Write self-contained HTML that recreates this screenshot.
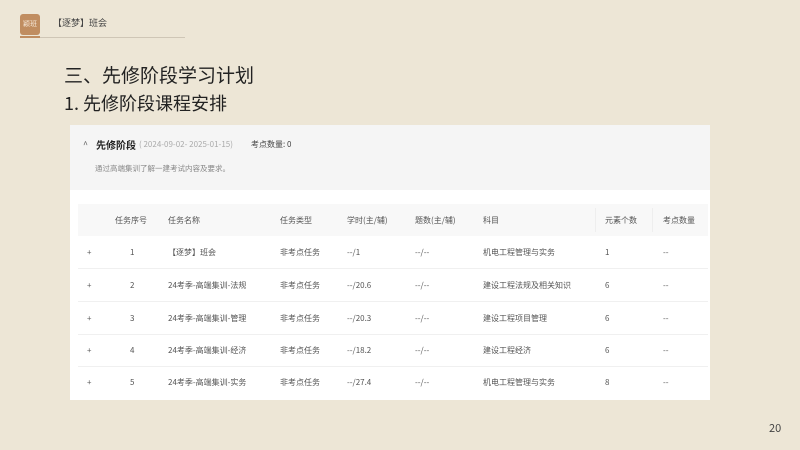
<!DOCTYPE html>
<html><head><meta charset="utf-8"><style>
*{margin:0;padding:0;box-sizing:border-box}
body{width:800px;height:450px;background:#ede6d6;font-family:"Noto Sans CJK SC",sans-serif;position:relative;overflow:hidden;color:#333}
.abs{position:absolute;white-space:nowrap;line-height:1.2}
.logo{left:20px;top:14px;width:20px;height:21px;background:#c08d60;border-radius:3px;color:#f4e6d6;font-size:7px;text-align:center;line-height:21px}
.line{left:20px;top:37px;width:165px;height:1px;background:#cfc6b6}
.line2{left:20px;top:36px;width:20px;height:2px;background:#c08d60}
.panel{left:70px;top:125px;width:640px;height:275px;background:#fff}
.top{left:70px;top:125px;width:640px;height:65px;background:#f5f5f5}
.hdr{left:78px;top:204px;width:630px;height:32px;background:#f8f8f8}
.t{font-size:8px;color:#555}
</style></head><body>
<div class="abs logo">颖班</div>
<div class="abs line"></div><div class="abs line2"></div>
<div class="abs" style="left:53px;top:18px;font-size:9px;color:#444">【逐梦】班会</div>
<div class="abs" style="left:64px;top:64px;font-size:19px;color:#222">三、先修阶段学习计划</div>
<div class="abs" style="left:64px;top:93px;font-size:18px;color:#222">1. 先修阶段课程安排</div>
<div class="abs panel"></div>
<div class="abs top"></div>
<div class="abs" style="left:83px;top:140px;font-size:9px;color:#666">^</div>
<div class="abs" style="left:96px;top:139px;font-size:10px;font-weight:bold;color:#222">先修阶段</div>
<div class="abs" style="left:139px;top:140px;font-size:8px;color:#aaa">( 2024-09-02- 2025-01-15)</div>
<div class="abs" style="left:251px;top:140px;font-size:8px;color:#444">考点数量: 0</div>
<div class="abs" style="left:95px;top:164px;font-size:7.5px;color:#888">通过高端集训了解一建考试内容及要求。</div>
<div class="abs hdr"></div>
<div class="abs t" style="left:115px;top:216px">任务序号</div>
<div class="abs t" style="left:168px;top:216px">任务名称</div>
<div class="abs t" style="left:280px;top:216px">任务类型</div>
<div class="abs t" style="left:347px;top:216px">学时(主/辅)</div>
<div class="abs t" style="left:415px;top:216px">题数(主/辅)</div>
<div class="abs t" style="left:483px;top:216px">科目</div>
<div class="abs t" style="left:605px;top:216px">元素个数</div>
<div class="abs t" style="left:663px;top:216px">考点数量</div>
<div class="abs" style="left:595px;top:208px;width:1px;height:24px;background:#eee"></div>
<div class="abs" style="left:652px;top:208px;width:1px;height:24px;background:#eee"></div>

<div class="abs" style="left:78px;top:268px;width:630px;height:1px;background:#f0f0f0"></div>
<div class="abs" style="left:78px;top:301px;width:630px;height:1px;background:#f0f0f0"></div>
<div class="abs" style="left:78px;top:334px;width:630px;height:1px;background:#f0f0f0"></div>
<div class="abs" style="left:78px;top:366px;width:630px;height:1px;background:#f0f0f0"></div>

<div class="abs t" style="left:87px;top:248px">+</div><div class="abs t" style="left:130px;top:248px">1</div><div class="abs t" style="left:168px;top:248px">【逐梦】班会</div><div class="abs t" style="left:280px;top:248px">非考点任务</div><div class="abs t" style="left:347px;top:248px">--/1</div><div class="abs t" style="left:415px;top:248px">--/--</div><div class="abs t" style="left:483px;top:248px">机电工程管理与实务</div><div class="abs t" style="left:605px;top:248px">1</div><div class="abs t" style="left:663px;top:248px">--</div>

<div class="abs t" style="left:87px;top:281px">+</div><div class="abs t" style="left:130px;top:281px">2</div><div class="abs t" style="left:168px;top:281px">24考季-高端集训-法规</div><div class="abs t" style="left:280px;top:281px">非考点任务</div><div class="abs t" style="left:347px;top:281px">--/20.6</div><div class="abs t" style="left:415px;top:281px">--/--</div><div class="abs t" style="left:483px;top:281px">建设工程法规及相关知识</div><div class="abs t" style="left:605px;top:281px">6</div><div class="abs t" style="left:663px;top:281px">--</div>

<div class="abs t" style="left:87px;top:314px">+</div><div class="abs t" style="left:130px;top:314px">3</div><div class="abs t" style="left:168px;top:314px">24考季-高端集训-管理</div><div class="abs t" style="left:280px;top:314px">非考点任务</div><div class="abs t" style="left:347px;top:314px">--/20.3</div><div class="abs t" style="left:415px;top:314px">--/--</div><div class="abs t" style="left:483px;top:314px">建设工程项目管理</div><div class="abs t" style="left:605px;top:314px">6</div><div class="abs t" style="left:663px;top:314px">--</div>

<div class="abs t" style="left:87px;top:346px">+</div><div class="abs t" style="left:130px;top:346px">4</div><div class="abs t" style="left:168px;top:346px">24考季-高端集训-经济</div><div class="abs t" style="left:280px;top:346px">非考点任务</div><div class="abs t" style="left:347px;top:346px">--/18.2</div><div class="abs t" style="left:415px;top:346px">--/--</div><div class="abs t" style="left:483px;top:346px">建设工程经济</div><div class="abs t" style="left:605px;top:346px">6</div><div class="abs t" style="left:663px;top:346px">--</div>

<div class="abs t" style="left:87px;top:378px">+</div><div class="abs t" style="left:130px;top:378px">5</div><div class="abs t" style="left:168px;top:378px">24考季-高端集训-实务</div><div class="abs t" style="left:280px;top:378px">非考点任务</div><div class="abs t" style="left:347px;top:378px">--/27.4</div><div class="abs t" style="left:415px;top:378px">--/--</div><div class="abs t" style="left:483px;top:378px">机电工程管理与实务</div><div class="abs t" style="left:605px;top:378px">8</div><div class="abs t" style="left:663px;top:378px">--</div>

<div class="abs" style="left:769px;top:422px;font-size:11px;color:#444">20</div>
</body></html>
